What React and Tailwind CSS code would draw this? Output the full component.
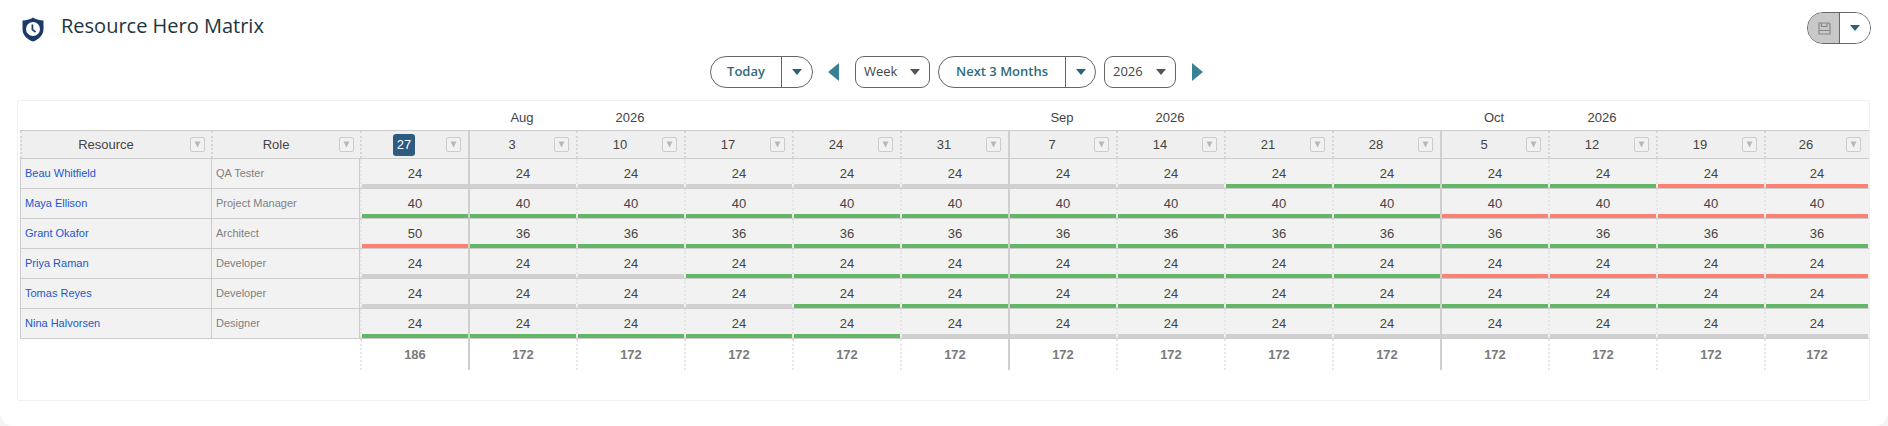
const DATES = [27, 3, 10, 17, 24, 31, 7, 14, 21, 28, 5, 12, 19, 26];
const THICK = [1, 6, 10];
const TOTALS = [186, 172, 172, 172, 172, 172, 172, 172, 172, 172, 172, 172, 172, 172];
const MONTHS = { 1: "Aug", 2: "2026", 6: "Sep", 7: "2026", 10: "Oct", 11: "2026" };
const ROWS = [
  { name: "Beau Whitfield", role: "QA Tester", values: Array(14).fill(24), bars: "xxxxxxxxggggrr" },
  { name: "Maya Ellison", role: "Project Manager", values: Array(14).fill(40), bars: "ggggggggggrrrr" },
  { name: "Grant Okafor", role: "Architect", values: [50, ...Array(13).fill(36)], bars: "rggggggggggggg" },
  { name: "Priya Raman", role: "Developer", values: Array(14).fill(24), bars: "xxxgggggggrrrr" },
  { name: "Tomas Reyes", role: "Developer", values: Array(14).fill(24), bars: "xxxxgggggggggg" },
  { name: "Nina Halvorsen", role: "Designer", values: Array(14).fill(24), bars: "gggggxxxxxxxxx" },
];
const BAR = { x: "bg-[#d0d0d0]", g: "bg-[#62b666]", r: "bg-[#fd8072]" };
const GRID = "grid grid-cols-[191px_149px_repeat(13,108px)_104px]";

function Caret({ className }) {
  return (
    <svg width="10" height="6" viewBox="0 0 10 6" className={className}>
      <path d="M0 0H10L5 6Z" fill="currentColor" />
    </svg>
  );
}

function Filter() {
  return (
    <span className="flex h-[15px] w-[15px] shrink-0 items-center justify-center rounded-[2px] border border-[#cccccc] bg-[#f1f1f1]">
      <svg width="7" height="7" viewBox="0 0 7 7">
        <path d="M0.5 0.5H6.5L3.5 6.5Z" fill="#b8b8b8" />
      </svg>
    </span>
  );
}

function Split({ label, widthClass, labelClass }) {
  return (
    <div className="flex h-8 items-stretch rounded-full border border-[#666666] bg-white">
      <div className={`flex items-center justify-center font-semibold text-[#2f6b7a] ${labelClass}`}>{label}</div>
      <div className={`flex items-center justify-center border-l border-[#666666] text-[#2a6475] ${widthClass}`}>
        <Caret />
      </div>
    </div>
  );
}

function Select({ label, className }) {
  return (
    <div className={`flex h-8 items-center justify-between rounded-[9px] border border-[#666666] bg-white pl-2 pr-[9px] text-[#444444] ${className}`}>
      <span>{label}</span>
      <Caret className="text-[#555555]" />
    </div>
  );
}

function sep(i, body) {
  if (THICK.includes(i)) return "border-l-2 border-solid border-[#cfcfcf]";
  return body
    ? "border-l-2 border-dotted border-[#e6e6e6]"
    : "border-l-2 border-dotted border-[#d6d6d6]";
}

export default function App() {
  return (
    <div className="h-[426px] w-[1888px] overflow-hidden bg-[#f4f4f4] font-['Liberation_Sans',Arial,sans-serif]">
      <div className="h-full rounded-b-[14px] bg-white pt-[12px]">
        <div className="flex h-8 items-center justify-between pl-[22px] pr-[17px]">
          <div className="flex items-center gap-[17px]">
            <svg width="22" height="25" viewBox="0 0 22 25" className="mt-[2px]">
              <path d="M11 0.5C13.5 2.4 17 3.2 21.5 3.4V12C21.5 18 17 22.5 11 24.5C5 22.5 0.5 18 0.5 12V3.4C5 3.2 8.5 2.4 11 0.5Z" fill="#1b3a68" />
              <circle cx="11" cy="12" r="7" fill="#ffffff" />
              <path d="M10.4 7.6V12.6L13.6 15.2" fill="none" stroke="#1b3a68" strokeWidth="1.7" />
            </svg>
            <span className="-mt-[5px] font-['Open_Sans',sans-serif] text-[20px] leading-7 text-[#1d3540]">Resource Hero Matrix</span>
          </div>
          <div className="flex h-8 w-16 items-stretch overflow-hidden rounded-full border border-[#666666]">
            <div className="flex w-[31px] items-center justify-center bg-[#c8c8c8] pl-[2px]">
              <svg width="13" height="13" viewBox="0 0 13 13" fill="none" stroke="#868686" strokeWidth="1.2">
                <path d="M1 1H11L12 2V12H1Z" />
                <path d="M3.5 1V4.5H9V1" />
                <path d="M1.5 8.5H11.5" />
              </svg>
            </div>
            <div className="flex flex-1 items-center justify-center border-l border-[#666666] bg-white text-[#2a6475]">
              <Caret />
            </div>
          </div>
        </div>

        <div className="mt-[12px] flex h-8 items-center pl-[710px] font-['Open_Sans',sans-serif] text-[13px]">
          <Split label="Today" labelClass="w-[70px]" widthClass="w-[31px]" />
          <svg width="11" height="18" viewBox="0 0 11 18" className="ml-[15px] text-[#3b8093]">
            <path d="M11 0V18L0 9Z" fill="currentColor" />
          </svg>
          <Select label="Week" className="ml-4 w-[75px]" />
          <div className="ml-2">
            <Split label="Next 3 Months" labelClass="w-[126px]" widthClass="w-[30px]" />
          </div>
          <Select label="2026" className="ml-2 w-[72px]" />
          <svg width="11" height="18" viewBox="0 0 11 18" className="ml-4 text-[#3b8093]">
            <path d="M0 0V18L11 9Z" fill="currentColor" />
          </svg>
        </div>

        <div className="ml-[17px] mt-[12px] h-[301px] w-[1853px] rounded-[2px] border border-[#f0f0f0] pl-[2px] text-[13px] text-[#444444]">
          <div className={`${GRID} h-[29px]`}>
            <div className="col-span-2" />
            {DATES.map((_, i) => (
              <div key={i} className="flex items-center justify-center pt-[5px] text-[#444444]">
                {MONTHS[i] ?? ""}
              </div>
            ))}
          </div>

          <div className={`${GRID} h-[29px] border-y border-[#cccccc] bg-[#efefef]`}>
            <div className="flex items-center border-l-2 border-dotted border-[#d6d6d6] pr-[6px]">
              <span className="flex-1 text-center">Resource</span>
              <Filter />
            </div>
            <div className="flex items-center border-l-2 border-dotted border-[#d6d6d6] pr-[6px]">
              <span className="flex-1 text-center">Role</span>
              <Filter />
            </div>
            {DATES.map((d, i) => (
              <div key={i} className={`flex items-center pr-[7px] ${sep(i, false)}`}>
                <span className="flex flex-1 justify-center">
                  {i === 0 ? (
                    <span className="flex h-[22px] w-[22px] items-center justify-center rounded-[3px] bg-[#2d5b82] text-white">{d}</span>
                  ) : (
                    d
                  )}
                </span>
                <Filter />
              </div>
            ))}
          </div>

          {ROWS.map((r) => (
            <div key={r.name} className={`${GRID} h-[30px] border-b border-[#cccccc] bg-[#f2f2f2]`}>
              <div className="flex items-center border-l border-[#cccccc] pl-[4px] text-[11px] text-[#2456cf]">{r.name}</div>
              <div className="flex items-center border-x border-[#cccccc] pl-[4px] text-[11px] text-[#808080]">{r.role}</div>
              {r.values.map((v, i) => (
                <div key={i} className={`flex flex-col ${sep(i, true)}`}>
                  <span className="flex flex-1 items-center justify-center pt-[4px]">{v}</span>
                  <span className={`h-1 ${BAR[r.bars[i]]}`} />
                </div>
              ))}
            </div>
          ))}

          <div className={`${GRID} h-[31px]`}>
            <div className="col-span-2" />
            {TOTALS.map((t, i) => (
              <div key={i} className={`flex items-center justify-center font-bold text-[#7a7a7a] ${sep(i, true)}`}>
                {t}
              </div>
            ))}
          </div>
        </div>
      </div>
    </div>
  );
}
